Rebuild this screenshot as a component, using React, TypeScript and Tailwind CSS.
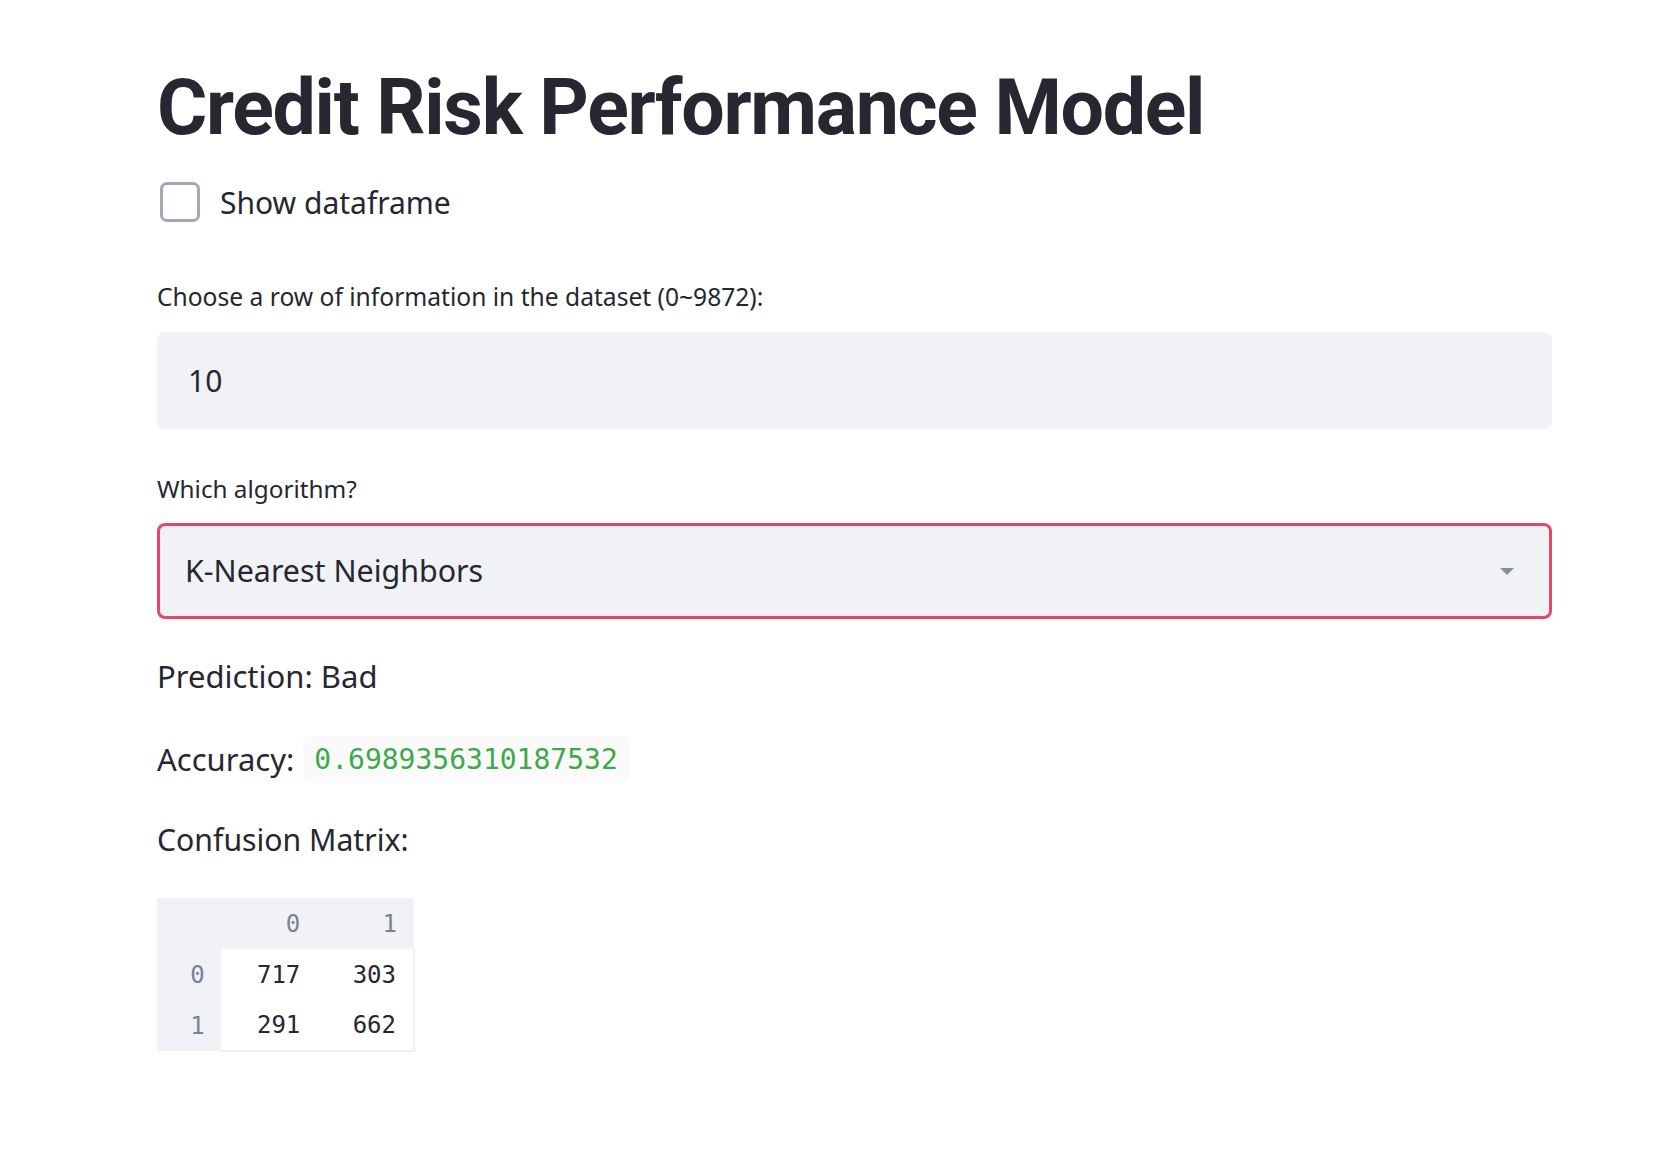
import React from 'react';

const SANS = { fontFamily: '"Noto Sans", "Open Sans", sans-serif' };
const TITLE = { fontFamily: 'Roboto, "Noto Sans", sans-serif' };
const MONO = { fontFamily: '"DejaVu Sans Mono", "Liberation Mono", monospace' };

const matrix = [
    [717, 303],
    [291, 662],
];

const App: React.FC = () => {
    return (
        <div className="min-h-screen bg-white text-[#262730]" style={SANS}>
            <div className="pl-[157px] w-[1552px] flex flex-col">
                <h1 className="mt-[60px] h-[96px] leading-[96px] text-[77px] font-bold tracking-[-1.3px] whitespace-nowrap" style={TITLE}>
                    Credit Risk Performance Model
                </h1>

                <label className="mt-[26px] h-[40px] flex items-center gap-[20px] cursor-pointer">
                    <span className="ml-[3px] w-[40px] h-[40px] rounded-[7px] border-[3px] border-[#a3a8b8] bg-white" />
                    <span className="text-[30px]">Show dataframe</span>
                </label>

                <div className="mt-[57px] h-[36px] flex items-center text-[24.6px]">
                    Choose a row of information in the dataset (0~9872):
                </div>
                <div className="mt-[17px] h-[97px] rounded-[8px] bg-[#f0f2f6] flex items-center pl-[31px] text-[30px]">
                    10
                </div>

                <div className="mt-[42px] h-[36px] flex items-center text-[24.3px]">Which algorithm?</div>
                <div className="mt-[16px] h-[96px] rounded-[8px] bg-[#f0f2f6] border-[3px] border-[#e4476b] flex items-center justify-between pl-[25px] pr-[35px] text-[30.4px]">
                    <span>K-Nearest Neighbors</span>
                    <svg width="14" height="7" viewBox="0 0 14 7">
                        <path d="M0 0 L14 0 L7 7 Z" fill="#8a8d9c" />
                    </svg>
                </div>

                <div className="mt-[37px] h-[40px] flex items-center text-[31px]">Prediction: Bad</div>

                <div className="mt-[40px] h-[47px] flex items-center text-[31px]">
                    <span>Accuracy:</span>
                    <span className="ml-[9px] h-[47px] px-[11px] rounded-[6px] bg-[#fafafa] text-[#3fa84a] text-[28px] flex items-center" style={MONO}>
                        0.6989356310187532
                    </span>
                </div>

                <div className="mt-[37px] h-[40px] flex items-center text-[30.2px]">Confusion Matrix:</div>

                <table className="mt-[38px] w-[258px] border-collapse text-[24px]" style={MONO}>
                    <thead>
                        <tr className="h-[51px] bg-[#f0f2f6] text-[#7d8196]">
                            <th className="w-[64px] p-0" />
                            <th className="w-[97px] p-0 pr-[17px] text-right font-normal">0</th>
                            <th className="w-[97px] p-0 pr-[17px] text-right font-normal">1</th>
                        </tr>
                    </thead>
                    <tbody>
                        {matrix.map((row, i) => (
                            <tr key={i} className="h-[51px]">
                                <th className="p-0 pr-[16px] text-right font-normal bg-[#f0f2f6] text-[#7d8196]">{i}</th>
                                {row.map((v, j) => (
                                    <td
                                        key={j}
                                        className={`p-0 pr-[17px] text-right bg-white ${j === 1 ? 'border-r-2 border-[#eceef3]' : ''} ${i === 1 ? 'border-b-2 border-[#eceef3]' : ''}`}
                                    >
                                        {v}
                                    </td>
                                ))}
                            </tr>
                        ))}
                    </tbody>
                </table>
            </div>
        </div>
    );
};

export default App;
